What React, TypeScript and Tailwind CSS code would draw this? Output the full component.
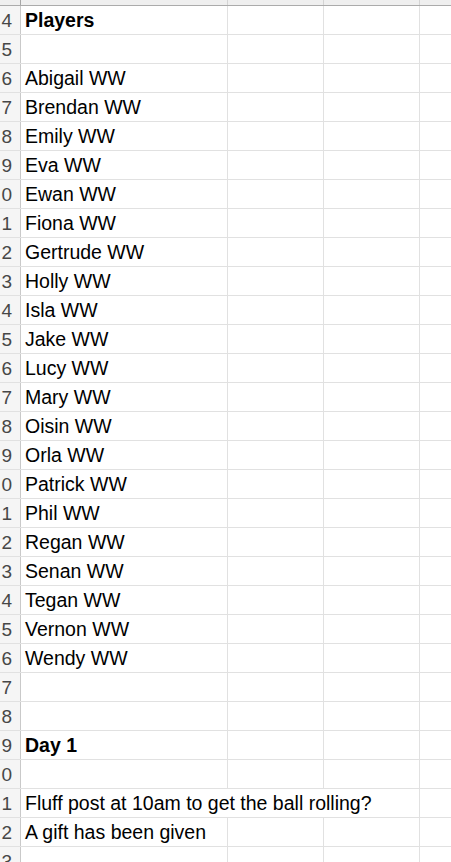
import React from "react";

type Row = { n: number; text?: string; bold?: boolean; span?: boolean };

const names = [
  "Abigail", "Brendan", "Emily", "Eva", "Ewan", "Fiona", "Gertrude", "Holly",
  "Isla", "Jake", "Lucy", "Mary", "Oisin", "Orla", "Patrick", "Phil", "Regan",
  "Senan", "Tegan", "Vernon", "Wendy",
];

const rows: Row[] = [
  { n: 4, text: "Players", bold: true },
  { n: 5 },
  ...names.map((name, i) => ({ n: 6 + i, text: `${name} WW` })),
  { n: 27 },
  { n: 28 },
  { n: 29, text: "Day 1", bold: true },
  { n: 30 },
  { n: 31, text: "Fluff post at 10am to get the ball rolling?", span: true },
  { n: 32, text: "A gift has been given" },
  { n: 33 },
];

function SheetRow({ row }: { row: Row }) {
  return (
    <div className="flex h-[29px] shrink-0 border-b border-[#e1e1e1]">
      {/* row header is scrolled off to the left: only the last digit shows */}
      <div className="w-[21px] shrink-0 border-r border-[#c9c9c9] bg-[#f5f5f5] flex items-center justify-end pr-[8px] text-[19px] text-[#474747] leading-none">
        <span>{row.n % 10}</span>
      </div>
      {row.span ? (
        <div className="w-[399px] shrink-0 border-r border-[#e1e1e1] flex items-center pl-[4px] pt-[1px]">
          <span className="whitespace-nowrap text-[19.5px] text-black leading-none">
            {row.text}
          </span>
        </div>
      ) : (
        <>
          <div className="w-[207px] shrink-0 border-r border-[#e1e1e1] flex items-center pl-[4px] pt-[1px]">
            <span
              className={`whitespace-nowrap text-[19.5px] text-black leading-none ${row.bold ? "font-bold" : ""}`}
            >
              {row.text}
            </span>
          </div>
          <div className="w-[96px] shrink-0 border-r border-[#e1e1e1]" />
          <div className="w-[96px] shrink-0 border-r border-[#e1e1e1]" />
        </>
      )}
      <div className="flex-1" />
    </div>
  );
}

export default function App() {
  return (
    <div
      className="w-[451px] h-[862px] overflow-hidden bg-white flex flex-col"
      style={{ fontFamily: '"Liberation Sans", Arial, sans-serif' }}
    >
      {/* Column header strip (cut off) */}
      <div className="flex h-[6px] shrink-0 border-b border-[#ababab] bg-[#efefef]">
        <div className="w-[21px] shrink-0 border-r border-[#a6a6a6]" />
        <div className="w-[207px] shrink-0 border-r border-[#d4d4d4]" />
        <div className="w-[96px] shrink-0 border-r border-[#d4d4d4]" />
        <div className="w-[96px] shrink-0 border-r border-[#d4d4d4]" />
        <div className="flex-1" />
      </div>

      {rows.map((row) => (
        <SheetRow key={row.n} row={row} />
      ))}
    </div>
  );
}
